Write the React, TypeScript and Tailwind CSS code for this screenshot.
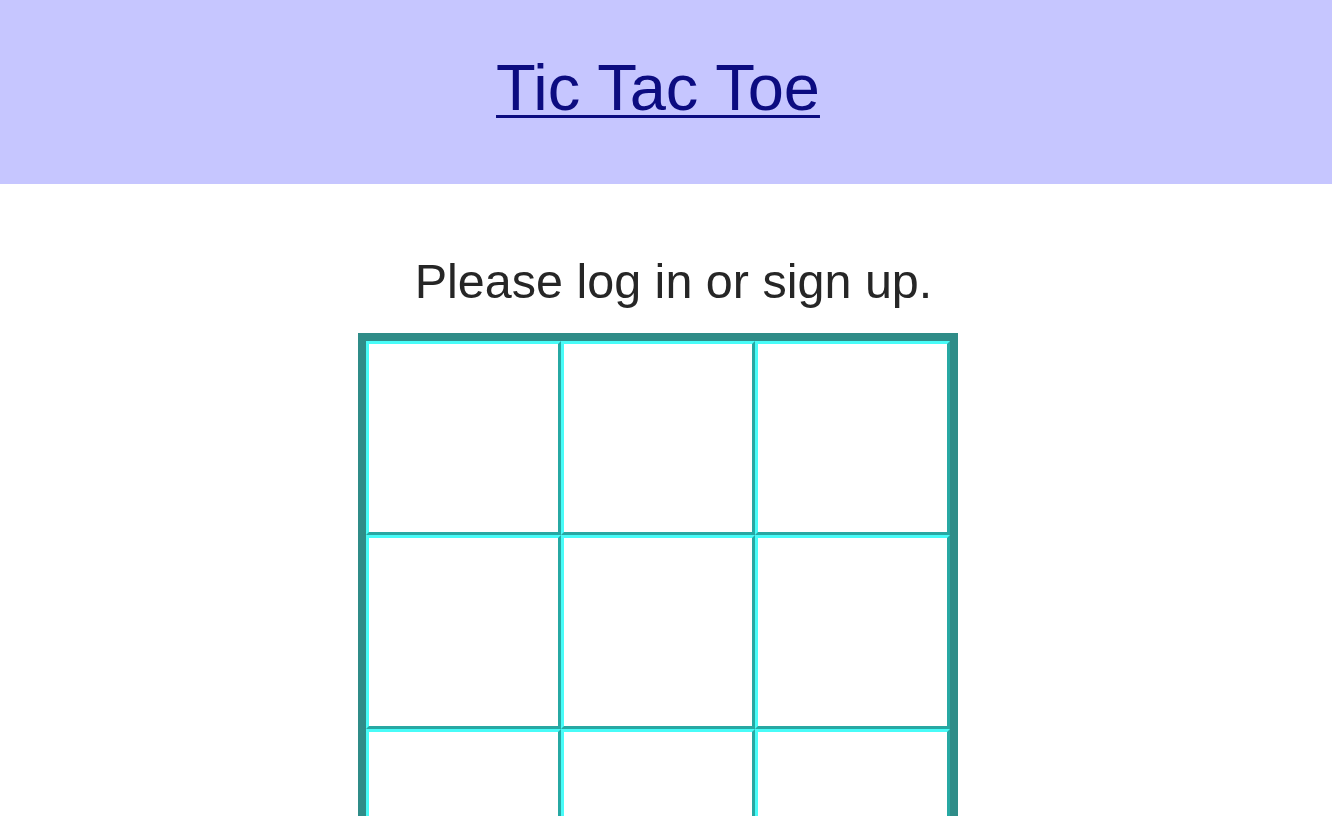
import React from "react";

const Cell = () => (
  <div className="h-[194px] border-[3px] border-t-[#48fcf8] border-l-[#48fcf8] border-r-[#27a8a3] border-b-[#27a8a3] bg-white" />
);

export default function App() {
  return (
    <div className="w-[1332px] h-[816px] overflow-hidden bg-white" style={{ fontFamily: '"Liberation Sans", Arial, Helvetica, sans-serif' }}>
      <header className="h-[184px] bg-[#c6c6ff] pt-[39px] pr-[16px] flex justify-center">
        <a href="#" className="h-fit text-[65px] leading-normal text-[#0c0c80] underline decoration-[3px] underline-offset-[5px]">
          Tic Tac Toe
        </a>
      </header>
      <main className="pr-[16px] flex flex-col items-center">
        <p className="mt-[61px] pl-[31px] text-[48.5px] leading-normal text-[#262626]">Please log in or sign up.</p>
        <div className="mt-[15px] w-[600px] border-[8px] border-[#2f8c88] grid grid-cols-3">
          {Array.from({ length: 9 }).map((_, i) => (
            <Cell key={i} />
          ))}
        </div>
      </main>
    </div>
  );
}
